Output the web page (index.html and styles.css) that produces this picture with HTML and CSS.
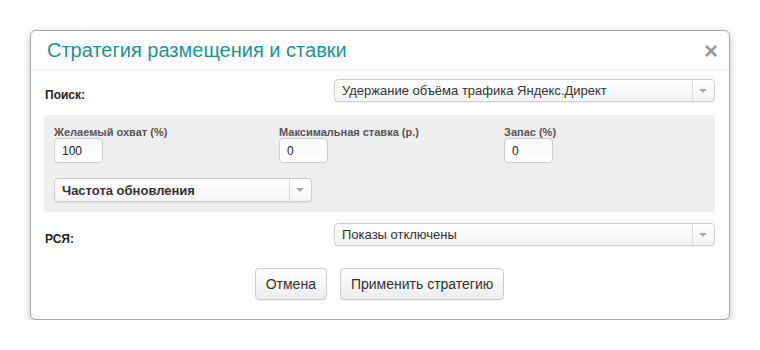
FILE: index.html
```html
<!DOCTYPE html>
<html lang="ru">
<head>
    <meta charset="UTF-8">
    <title>Стратегия размещения и ставки</title>
    <link rel="stylesheet" href="styles.css">
</head>
<body>
    <div class="modal">
        <div class="modal-header">
            <h2>Стратегия размещения и ставки</h2>
            <span class="close">&times;</span>
        </div>

        <div class="modal-body">
            <div class="row">
                <label class="row-label">Поиск:</label>
                <div class="select wide">
                    <span>Удержание объёма трафика Яндекс.Директ</span>
                    <b class="arrow"></b>
                </div>
            </div>

            <div class="panel">
                <div class="fields">
                    <div class="field">
                        <label>Желаемый охват (%)</label>
                        <input type="text" value="100">
                    </div>
                    <div class="field">
                        <label>Максимальная ставка (р.)</label>
                        <input type="text" value="0">
                    </div>
                    <div class="field">
                        <label>Запас (%)</label>
                        <input type="text" value="0">
                    </div>
                </div>
                <div class="select small">
                    <span>Частота обновления</span>
                    <b class="arrow"></b>
                </div>
            </div>

            <div class="row">
                <label class="row-label">РСЯ:</label>
                <div class="select wide">
                    <span>Показы отключены</span>
                    <b class="arrow"></b>
                </div>
            </div>

            <div class="buttons">
                <button>Отмена</button>
                <button>Применить стратегию</button>
            </div>
        </div>
    </div>
</body>
</html>
```

FILE: styles.css
```css
* {
    margin: 0;
    padding: 0;
    box-sizing: border-box;
}
body {
    font-family: "Liberation Sans", Arial, sans-serif;
    background: #fff;
    color: #333;
    padding: 30px 0 0 30px;
}
.modal {
    width: 700px;
    height: 290px;
    background: #fff;
    border: 1px solid #a6a6a6;
    border-radius: 6px;
    box-shadow: 0 3px 10px rgba(0, 0, 0, 0.25);
}
.modal-header {
    display: flex;
    justify-content: space-between;
    align-items: center;
    height: 39px;
    padding: 0 11px 0 16px;
    border-bottom: 1px solid #eaeaea;
}
.modal-header h2 {
    font-size: 20px;
    font-weight: normal;
    color: #17968e;
}
.close {
    font-size: 24px;
    font-weight: bold;
    color: #999;
    line-height: 1;
    margin-top: 1px;
}
.modal-body {
    padding: 8px 14px 0 13px;
}
.row {
    display: flex;
    justify-content: space-between;
    align-items: flex-start;
}
.row-label {
    font-size: 12px;
    font-weight: bold;
    color: #222;
    padding: 10px 0 0 1px;
}
.select {
    display: flex;
    align-items: center;
    height: 23px;
    background: linear-gradient(#fff, #f4f4f4);
    border: 1px solid #ccc;
    border-radius: 4px;
    box-shadow: 0 1px 1px rgba(0, 0, 0, 0.05);
    font-size: 13px;
    color: #333;
}
.select span {
    flex: 1;
    padding-left: 7px;
}
.select .arrow {
    width: 22px;
    height: 100%;
    border-left: 1px solid #ddd;
    position: relative;
}
.select .arrow::after {
    content: "";
    position: absolute;
    left: 6px;
    top: 9px;
    border-left: 4px solid transparent;
    border-right: 4px solid transparent;
    border-top: 4px solid #aaa;
}
.select.wide {
    width: 381px;
    margin-top: 1px;
}
.select.small {
    width: 258px;
    height: 24px;
    font-weight: bold;
}
.panel {
    margin: 13px 0 10px 0;
    background: #eee;
    border-radius: 4px;
    padding: 11px 10px 10px 10px;
}
.fields {
    display: flex;
    margin-bottom: 15px;
}
.field {
    flex: 0 0 225px;
}
.field:last-child {
    flex: 1;
}
.field label {
    display: block;
    font-size: 11px;
    font-weight: bold;
    color: #555;
    height: 12px;
    line-height: 12px;
}
.field input {
    display: block;
    width: 49px;
    height: 25px;
    border: 1px solid #ccc;
    border-radius: 4px;
    background: linear-gradient(#f8f8f8, #fff);
    font-family: inherit;
    font-size: 12px;
    color: #222;
    padding-left: 7px;
    outline: none;
}
.buttons {
    display: flex;
    justify-content: center;
    gap: 13px;
    margin-top: 22px;
}
.buttons button {
    height: 32px;
    padding: 0 10px;
    font-family: inherit;
    font-size: 14px;
    color: #333;
    background: linear-gradient(#fff, #ececec);
    border: 1px solid #ccc;
    border-radius: 4px;
    box-shadow: 0 1px 1px rgba(0, 0, 0, 0.06);
}
```
